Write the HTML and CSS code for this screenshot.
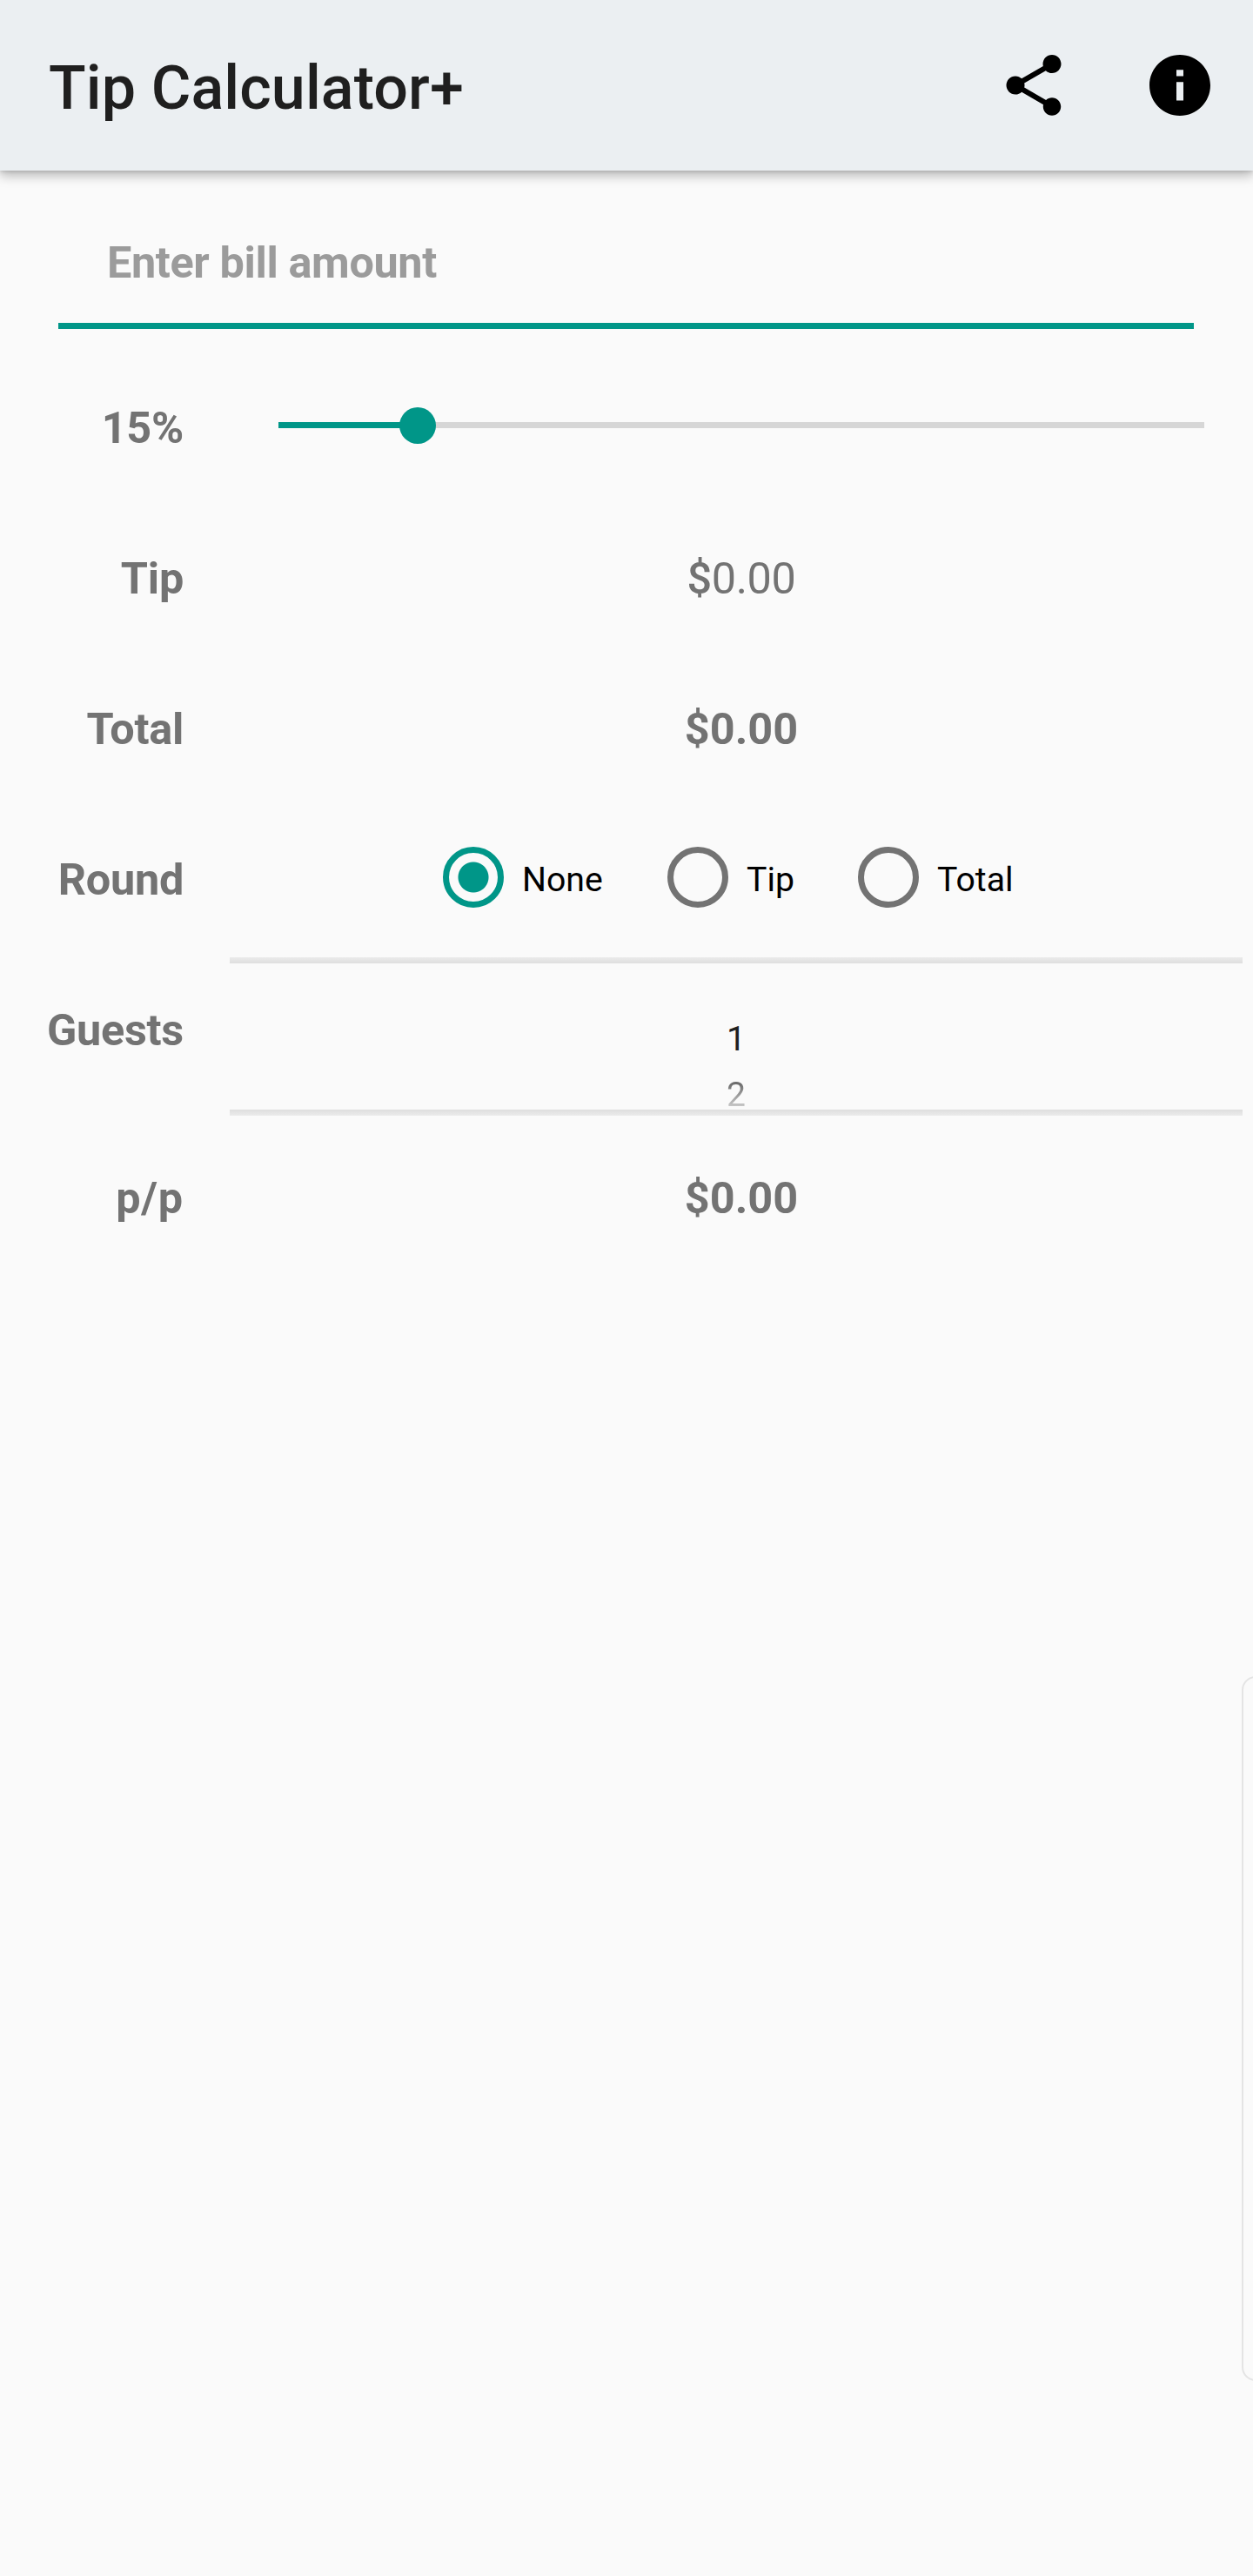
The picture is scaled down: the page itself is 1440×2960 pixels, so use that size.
FILE: index.html
```html
<!DOCTYPE html>
<html lang="en">
<head>
<meta charset="utf-8">
<title>Tip Calculator+</title>
<link rel="stylesheet" href="styles.css">
</head>
<body>
<header class="app-bar">
  <h1 class="title">Tip Calculator+</h1>
  <button class="action" aria-label="Share">
    <svg viewBox="0 0 24 24"><path d="M18 16.08c-.76 0-1.44.3-1.96.77L8.91 12.7c.05-.23.09-.46.09-.7s-.04-.47-.09-.7l7.05-4.11c.54.5 1.25.81 2.04.81 1.66 0 3-1.34 3-3s-1.34-3-3-3-3 1.34-3 3c0 .24.04.47.09.7L8.04 9.81C7.5 9.31 6.79 9 6 9c-1.66 0-3 1.34-3 3s1.34 3 3 3c.79 0 1.5-.31 2.04-.81l7.12 4.16c-.05.21-.08.43-.08.65 0 1.61 1.31 2.92 2.92 2.92s2.92-1.31 2.92-2.92-1.31-2.92-2.92-2.92z"/></svg>
  </button>
  <button class="action" aria-label="About">
    <svg viewBox="0 0 24 24"><path d="M12 2C6.48 2 2 6.48 2 12s4.48 10 10 10 10-4.48 10-10S17.52 2 12 2zm1.15 15h-2.3v-6.1h2.3V17zm0-8h-2.3V6.9h2.3V9z"/></svg>
  </button>
</header>
<main class="form">
  <input class="bill" type="text" placeholder="Enter bill amount" aria-label="Bill amount">
  <div class="row">
    <div class="label">15%</div>
    <div class="slider">
      <div class="track"><div class="progress" style="width:15%"></div></div>
      <div class="thumb" style="left:15%"></div>
    </div>
  </div>
  <div class="row"><div class="label">Tip</div><div class="value light"><span class="currency">$</span>0.00</div></div>
  <div class="row"><div class="label">Total</div><div class="value strong">$0.00</div></div>
  <div class="row">
    <div class="label">Round</div>
    <div class="radios">
      <label class="radio checked"><span class="ring"></span><span class="radio-text">None</span></label>
      <label class="radio"><span class="ring"></span><span class="radio-text">Tip</span></label>
      <label class="radio"><span class="ring"></span><span class="radio-text">Total</span></label>
    </div>
  </div>
  <div class="row guests">
    <div class="label">Guests</div>
    <div class="picker">
      <div class="divider top"></div>
      <div class="options"><div class="option">1</div><div class="option next">2</div></div>
      <div class="divider bottom"></div>
    </div>
  </div>
  <div class="row"><div class="label per-person">p/p</div><div class="value strong">$0.00</div></div>
</main>
<div class="edge-panel"></div>
</body>
</html>
```
FILE: styles.css
```css
* { box-sizing: border-box; }
body {
  margin: 0;
  position: relative;
  width: 1440px;
  height: 2960px;
  overflow: hidden;
  background: #fafafa;
  font-family: Roboto, sans-serif;
  color: #737373;
}
.app-bar {
  height: 196px;
  padding: 0 42px 0 56px;
  display: flex;
  align-items: center;
  gap: 84px;
  background: #ebeff2;
  box-shadow: 0 6px 12px rgba(0, 0, 0, .26), 0 1px 4px rgba(0, 0, 0, .14);
}
.title {
  flex: 1;
  margin: 0;
  padding-top: 6px;
  font-size: 70px;
  line-height: 82px;
  font-weight: 500;
  letter-spacing: .1px;
  color: #1f1f1f;
}
.action {
  width: 84px;
  height: 84px;
  padding: 0;
  border: 0;
  background: none;
}
.action svg { display: block; width: 84px; height: 84px; }
.bill {
  display: block;
  width: 1305px;
  height: 153px;
  margin: 29px 0 27px 67px;
  padding: 7px 55px 0 56px;
  border: 0;
  border-bottom: 7px solid #009688;
  border-radius: 0;
  outline: 0;
  background: none;
  font: 700 50.4px Roboto, sans-serif;
  letter-spacing: -.38px;
}
.bill::placeholder { color: #9b9b9b; opacity: 1; }
.row { display: flex; height: 173px; }
.label {
  width: 264px;
  padding-right: 53px;
  text-align: right;
  font-size: 50.4px;
  font-weight: 700;
  letter-spacing: -.25px;
  line-height: 173px;
}
.per-person { letter-spacing: .8px; }
.value {
  flex: 1;
  text-align: center;
  font-size: 50.4px;
  line-height: 173px;
}
.light { letter-spacing: -.4px; }
.currency { font-weight: 500; }
.strong { font-weight: 700; }
.slider {
  position: relative;
  width: 1064px;
  margin-left: 56px;
  padding-top: 80px;
}
.track { height: 7px; background: #d6d6d6; }
.progress { height: 7px; background: #009688; }
.thumb {
  position: absolute;
  top: 63px;
  width: 42px;
  height: 42px;
  margin-left: -21px;
  border-radius: 50%;
  background: #009688;
}
.radios {
  display: grid;
  grid-template-columns: 258px 219px auto;
  align-items: start;
  padding: 49px 0 0 245px;
}
.radio { display: flex; align-items: center; gap: 21px; height: 70px; }
.ring {
  flex: none;
  width: 70px;
  height: 70px;
  border: 7px solid #737373;
  border-radius: 50%;
}
.checked .ring {
  border-color: #009688;
  padding: 10.5px;
  background: radial-gradient(circle, #009688 17px, transparent 18px);
}
.radio-text { padding-top: 5px; font-size: 39.2px; line-height: 46px; color: #000; }
.guests { height: 193px; }
.picker { width: 1164px; height: 182px; margin-top: 3px; }
.divider { height: 7px; }
.divider.top { background: linear-gradient(#ebebeb, #dedede); }
.divider.bottom { background: linear-gradient(#dedede, #ebebeb); }
.options { height: 168px; padding-top: 55px; }
.option {
  height: 64px;
  line-height: 64px;
  text-align: center;
  font-size: 39.2px;
  color: #1f1f1f;
}
/* The following value fades out towards the lower divider. */
.option.next {
  height: 36px;
  margin-top: 14px;
  line-height: 36px;
  color: transparent;
  background: linear-gradient(#666 3px, #c6c6c6 31px);
  background-clip: text;
  -webkit-background-clip: text;
}
/* Handle of the system edge panel, partly off screen. */
.edge-panel {
  position: absolute;
  left: 1427px;
  top: 1926px;
  width: 40px;
  height: 810px;
  border: 2px solid #e4e4e4;
  border-radius: 16px;
}
```
